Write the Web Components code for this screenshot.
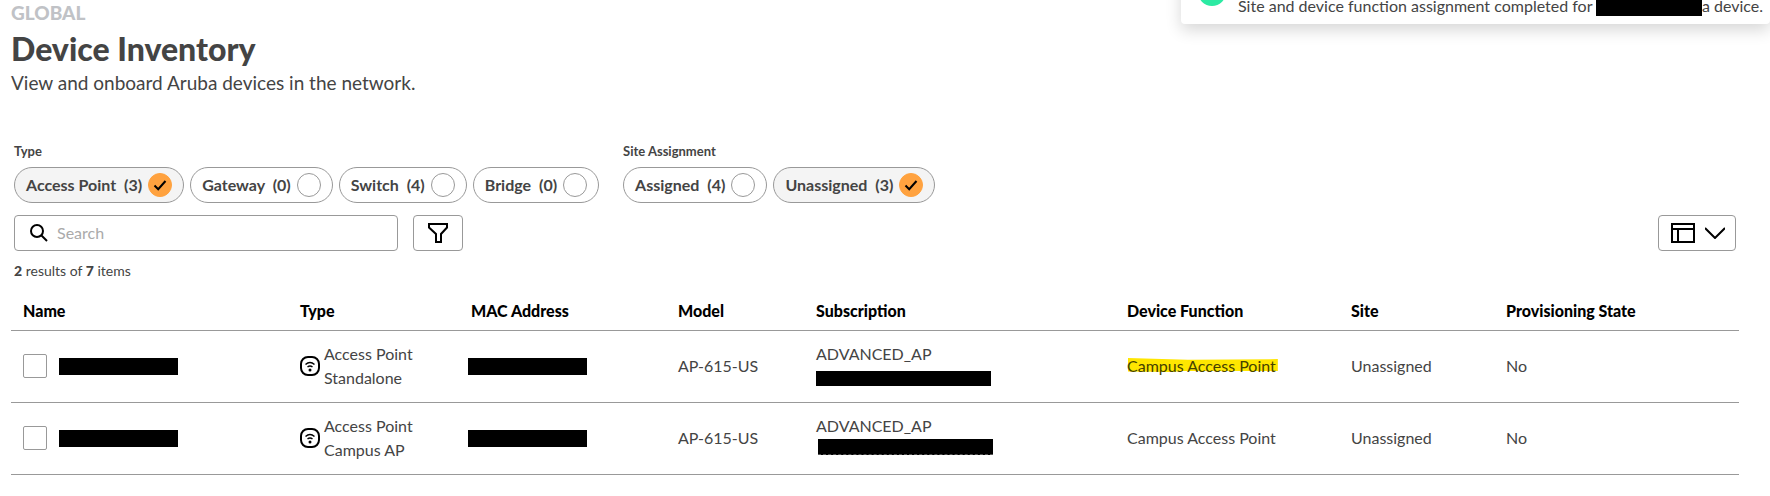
<!DOCTYPE html>
<html lang="en">
<head>
<meta charset="utf-8">
<meta name="viewport" content="width=device-width, initial-scale=1">
<title>Device Inventory</title>
<style>
  :root {
    --text: #444;
    --strong: #000;
    --line: #999;
    --accent: #ffa23f;
  }
  body {
    margin: 0;
    background: #fff;
    color: var(--text);
    font: 16px/24px Lato, "Open Sans", sans-serif;
  }
</style>
</head>
<body>
<inventory-page></inventory-page>

<script>
class PageHeading extends HTMLElement {
  constructor() {
    super();
    this.attachShadow({ mode: "open" }).innerHTML = `
      <style>
        :host { display: block; }
        .scope { margin: 0; font-size: 19px; line-height: 26px; font-weight: 900; color: #c0c2c6; }
        h1 { margin: 0; font-size: 32px; line-height: 46px; font-weight: 900; }
        .lead { margin: 0; font-size: 19px; line-height: 22px; }
      </style>
      <p class="scope"><slot name="scope"></slot></p>
      <h1><slot></slot></h1>
      <p class="lead"><slot name="lead"></slot></p>
    `;
  }
}
customElements.define("page-heading", PageHeading);

// black bar over private values
class RedactedText extends HTMLElement {
  constructor() {
    super();
    this.attachShadow({ mode: "open" }).innerHTML = `
      <style>
        :host { display: block; flex: none; width: 119px; height: 17px; background: #000; }
        :host([wide]) { width: 175px; height: 15px; }
      </style>
    `;
  }
}
customElements.define("redacted-text", RedactedText);

class ToastMessage extends HTMLElement {
  constructor() {
    super();
    this.attachShadow({ mode: "open" }).innerHTML = `
      <style>
        :host {
          position: absolute;
          top: -40px;
          right: 0;
          width: 589px;
          height: 64px;
          box-sizing: border-box;
          display: flex;
          align-items: flex-end;
          gap: 12px;
          padding: 0 0 6px 17px;
          background: #fff;
          border-radius: 4px;
          box-shadow: 0 6px 16px rgba(0, 0, 0, 0.16);
          white-space: nowrap;
        }
        .status { flex: none; width: 28px; height: 28px; margin-bottom: 12px; border-radius: 50%; background: #2ceaa3; }
        p { margin: 0; display: flex; }
        redacted-text { width: 106px; height: 24px; margin: -2px 0 0 -8px; }
      </style>
      <span class="status"></span>
      <p><slot name="before"></slot><redacted-text></redacted-text><slot name="after"></slot></p>
    `;
  }
}
customElements.define("toast-message", ToastMessage);

class FilterChip extends HTMLElement {
  connectedCallback() {
    const checked = this.hasAttribute("checked") ? "checked" : "";
    this.attachShadow({ mode: "open" }).innerHTML = `
      <style>
        :host { display: block; }
        label {
          display: flex;
          align-items: center;
          gap: 6px;
          height: 36px;
          box-sizing: border-box;
          padding: 0 11px;
          border: 1px solid var(--line);
          border-radius: 18px;
          font-weight: 700;
          white-space: nowrap;
          cursor: pointer;
        }
        label:has(:checked) { background: #f4f4f4; }
        .count { margin-left: 4px; }
        .tick { display: grid; }
        .tick > * { grid-area: 1 / 1; }
        input {
          appearance: none;
          width: 24px;
          height: 24px;
          margin: 0;
          box-sizing: border-box;
          border: 1px solid var(--line);
          border-radius: 50%;
          background: #fff;
        }
        input:checked { border-color: var(--accent); background: var(--accent); }
        svg { visibility: hidden; pointer-events: none; }
        input:checked + svg { visibility: visible; }
      </style>
      <label>
        <span><slot></slot> <span class="count">(${this.getAttribute("count")})</span></span>
        <span class="tick">
          <input type="checkbox" ${checked}>
          <svg width="24" height="24" fill="none" stroke="#000" stroke-width="2"><path d="M6.5 12.5l3.7 3.7L17.5 8"/></svg>
        </span>
      </label>
    `;
  }
}
customElements.define("filter-chip", FilterChip);

class ChipGroup extends HTMLElement {
  connectedCallback() {
    this.attachShadow({ mode: "open" }).innerHTML = `
      <style>
        :host { display: block; }
        fieldset { margin: 0; padding: 0; border: 0; min-width: 0; }
        legend { padding: 0; margin-bottom: 4px; font-size: 13px; line-height: 24px; font-weight: 700; }
        div { display: flex; flex-wrap: wrap; gap: 6px; }
      </style>
      <fieldset>
        <legend>${this.getAttribute("label")}</legend>
        <div><slot></slot></div>
      </fieldset>
    `;
  }
}
customElements.define("chip-group", ChipGroup);

class InventoryToolbar extends HTMLElement {
  constructor() {
    super();
    this.attachShadow({ mode: "open" }).innerHTML = `
      <style>
        :host { display: flex; }
        .search, button {
          height: 36px;
          box-sizing: border-box;
          display: flex;
          align-items: center;
          border: 1px solid var(--line);
          border-radius: 4px;
          background: #fff;
        }
        .search { flex: 0 1 384px; gap: 9px; padding: 0 15px; }
        input { flex: 1; min-width: 0; padding: 0; border: 0; outline: 0; background: none; font: inherit; color: inherit; }
        input::placeholder { color: #aaa; opacity: 1; }
        button { justify-content: center; padding: 0; cursor: pointer; }
        .filter { width: 50px; margin-left: 15px; }
        .columns { width: 78px; gap: 10px; margin-left: auto; padding: 0 10px 0 12px; }
        svg { display: block; flex: none; fill: none; stroke: #000; stroke-width: 2; }
      </style>
      <label class="search">
        <svg width="18" height="18" aria-hidden="true"><circle cx="7" cy="7" r="6"/><path d="M11.5 11.5l5.5 5.5"/></svg>
        <input type="search" placeholder="Search" aria-label="Search">
      </label>
      <button class="filter" aria-label="Filter">
        <svg width="20" height="20"><path d="M1 1h18v3.5l-6 6.5v8H8v-8L1 4.500z"/></svg>
      </button>
      <button class="columns" aria-label="Configure columns">
        <svg width="24" height="20"><path d="M1 1h22v18H1zM1 6h22M7 6v13"/></svg>
        <svg width="20" height="12"><path d="M0 1l10 10L20 1"/></svg>
      </button>
    `;
  }
}
customElements.define("inventory-toolbar", InventoryToolbar);

class DeviceTable extends HTMLElement {
  connectedCallback() {
    this.attachShadow({ mode: "open" });
    this.devices = [
      { type: "Standalone", model: "AP-615-US", tier: "ADVANCED_AP", role: "<mark>Campus Access Point</mark>", site: "Unassigned", state: "No" },
      { type: "Campus AP", model: "AP-615-US", tier: "ADVANCED_AP", role: "Campus Access Point", site: "Unassigned", state: "No", raised: true },
    ];
    this.render();
  }

  renderRow(d, i) {
    return `
      <tr>
        <td><div class="name"><input type="checkbox" aria-label="Select device ${i + 1}"><redacted-text></redacted-text></div></td>
        <td>
          <div class="type">
            <svg width="20" height="20" aria-hidden="true">
              <rect x="1" y="1" width="18" height="18" rx="7"/>
              <path d="M5.500 8.500Q10 4.500 14.500 8.500M7.500 11q2.500-2 5 0"/>
              <circle cx="10" cy="14" r="1.500"/>
            </svg>
            <span>Access Point<br>${d.type}</span>
          </div>
        </td>
        <td><redacted-text class="mac"></redacted-text></td>
        <td>${d.model}</td>
        <td>${d.tier}<div class="key ${d.raised ? "raised" : ""}"><redacted-text wide></redacted-text></div></td>
        <td>${d.role}</td>
        <td>${d.site}</td>
        <td>${d.state}</td>
      </tr>`;
  }

  render() {
    this.shadowRoot.innerHTML = `
      <style>
        :host { display: block; }
        table { width: 100%; table-layout: fixed; border-collapse: collapse; }
        th, td { box-sizing: border-box; text-align: left; vertical-align: middle; border-bottom: 1px solid var(--line); }
        th { height: 38px; padding: 1px 0 0 12px; font-weight: 900; color: var(--strong); white-space: nowrap; }
        td { height: 72px; padding: 0 0 0 12px; }
        .name { display: flex; align-items: center; gap: 12px; }
        input { appearance: none; flex: none; width: 24px; height: 24px; margin: 0; box-sizing: border-box; border: 1px solid var(--line); border-radius: 2px; background: #fff; }
        .type { display: flex; align-items: center; gap: 4px; }
        svg { flex: none; fill: none; stroke: #000; stroke-width: 2; }
        svg path { stroke-width: 1.5; }
        svg circle { fill: #000; stroke: none; }
        .mac { margin-left: -3px; }
        .key { display: flex; align-items: center; height: 24px; }
        .key.raised { align-items: flex-start; }
        .raised redacted-text { margin: 1px 0 0 2px; border-bottom: 1px dashed #555; }
        mark { position: relative; z-index: 0; background: none; color: #454100; }
        mark::before {
          content: "";
          position: absolute;
          z-index: -1;
          inset: 2px -2px 3px 1px;
          background: #ffe600;
          clip-path: polygon(0 0, 40% 12%, 100% 8%, 100% 92%, 35% 92%, 30% 100%, 0 96%);
        }
      </style>
      <table>
        <colgroup>
          <col style="width:277px"><col style="width:171px"><col style="width:207px"><col style="width:138px">
          <col style="width:311px"><col style="width:224px"><col style="width:155px"><col style="width:245px">
        </colgroup>
        <thead>
          <tr><th>Name</th><th>Type</th><th>MAC Address</th><th>Model</th><th>Subscription</th><th>Device Function</th><th>Site</th><th>Provisioning State</th></tr>
        </thead>
        <tbody>${this.devices.map((d, i) => this.renderRow(d, i)).join("")}</tbody>
      </table>
    `;
  }
}
customElements.define("device-table", DeviceTable);

class InventoryPage extends HTMLElement {
  constructor() {
    super();
    this.attachShadow({ mode: "open" }).innerHTML = `
      <style>
        :host { display: block; position: relative; overflow: hidden; padding: 0 31px 20px 11px; }
        .filters { display: flex; flex-wrap: wrap; gap: 24px; margin: 45px 3px 12px; }
        inventory-toolbar { margin: 0 3px; }
        .results { margin: 8px 3px 9px; font-size: 14px; line-height: 24px; }
        .results b { font-weight: 900; }
      </style>
      <toast-message>
        <span slot="before">Site and device function assignment completed for c</span>
        <span slot="after">a device.</span>
      </toast-message>
      <page-heading>
        <span slot="scope">GLOBAL</span>
        Device Inventory
        <span slot="lead">View and onboard Aruba devices in the network.</span>
      </page-heading>
      <div class="filters">
        <chip-group label="Type">
          <filter-chip count="3" checked>Access Point</filter-chip>
          <filter-chip count="0">Gateway</filter-chip>
          <filter-chip count="4">Switch</filter-chip>
          <filter-chip count="0">Bridge</filter-chip>
        </chip-group>
        <chip-group label="Site Assignment">
          <filter-chip count="4">Assigned</filter-chip>
          <filter-chip count="3" checked>Unassigned</filter-chip>
        </chip-group>
      </div>
      <inventory-toolbar></inventory-toolbar>
      <p class="results"><b>2</b> results of <b>7</b> items</p>
      <device-table></device-table>
    `;
  }
}
customElements.define("inventory-page", InventoryPage);
</script>
</body>
</html>
